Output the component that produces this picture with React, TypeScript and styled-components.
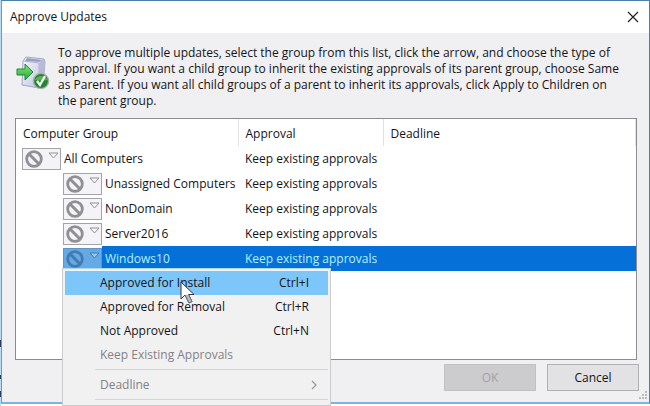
import React from "react";
import styled, { createGlobalStyle, css } from "styled-components";

const GlobalStyle = createGlobalStyle`
  *, *::before, *::after { box-sizing: border-box; }
  html, body { margin: 0; padding: 0; }
  body {
    overflow: hidden;
    color: #141416;
    font: 12px/16px "Open Sans", "Noto Sans", sans-serif;
  }
  button { font: inherit; color: inherit; }
`;

const Desktop = styled.div`
  display: flex;
  flex-direction: column;
  height: 100vh;
  padding: 0 0 2px 1px;
  background:
    linear-gradient(#2b3f66, #2b3f66) 0 340px / 1px 7px no-repeat,
    linear-gradient(#2b3f66, #2b3f66) 0 375px / 1px 4px no-repeat,
    linear-gradient(#2b3f66, #2b3f66) 0 391px / 1px 6px no-repeat,
    linear-gradient(#b9dcf0, #b9dcf0) 0 0 / 1px 100% no-repeat,
    #ffffff;
`;

const Dialog = styled.section`
  flex: 1;
  min-height: 0;
  display: flex;
  flex-direction: column;
  background: #f0eff1;
  border: 1px solid #4a7fae;
  border-left-color: #5d9fd0;
  border-bottom: 2px solid #7db5dd;
`;

const TitleBar = styled.header`
  display: flex;
  align-items: center;
  justify-content: space-between;
  height: 32px;
  padding: 0 8px;
  background: #ffffff;
`;

const Title = styled.h1`
  margin: 0;
  font-size: 12px;
  font-weight: 400;
`;

const CloseButton = styled.button`
  display: flex;
  padding: 2px;
  border: 0;
  background: none;
`;

const Intro = styled.div`
  display: flex;
  gap: 8px;
  padding: 12px 24px 9px 14px;

  svg { flex: none; margin-top: 11px; }
  p { margin: 0; }
`;

const ListBox = styled.div`
  flex: 1;
  min-height: 0;
  margin: 0 12px 0 13px;
  background: #ffffff;
  border: 1px solid #8c8c90;
`;

const GroupTable = styled.table`
  width: 100%;
  table-layout: fixed;
  border-collapse: collapse;
`;

const HeadCell = styled.th<{ $width?: number }>`
  height: 27px;
  width: ${(p) => (p.$width ? `${p.$width}px` : "auto")};
  padding: 3px 7px 0;
  border-right: 1px solid #e2e2e5;
  font-weight: 400;
  text-align: left;
`;

const Row = styled.tr<{ $selected?: boolean }>`
  height: 25px;
  ${(p) => p.$selected && css`color: #b4f1ff;`}
`;

const Cell = styled.td<{ $selected?: boolean }>`
  padding: 0 7px;
  white-space: nowrap;
  background: ${(p) => (p.$selected ? "#0470d8" : "transparent")};
`;

const GroupCell = styled.td`
  position: relative;
  padding: 0;
`;

const GroupLine = styled.div<{ $child?: boolean }>`
  display: flex;
  align-items: center;
  height: 25px;
  padding-left: ${(p) => (p.$child ? 47 : 6)}px;
`;

const GroupName = styled.span<{ $selected?: boolean }>`
  flex: 1;
  padding-left: 3px;
  line-height: 25px;
  white-space: nowrap;
  background: ${(p) => (p.$selected ? "#0470d8" : "transparent")};
`;

const StateButton = styled.button<{ $selected?: boolean }>`
  display: flex;
  flex: none;
  width: 39px;
  height: 22px;
  padding: 0;
  border: 1px solid ${(p) => (p.$selected ? "#6295c3" : "#a3a3a8")};
  background: ${(p) => (p.$selected ? "#63aae6" : "#f4f4f8")};
  color: ${(p) => (p.$selected ? "#427cae" : "#909094")};
`;

const Menu = styled.div`
  position: absolute;
  z-index: 2;
  top: 22px;
  left: 46px;
  width: 269px;
  padding: 2px;
  color: #141416;
  background: #f2f1f2;
  border: 1px solid #cccccc;
  border-top-color: #a9d9f5;
`;

const MenuItem = styled.button<{ $active?: boolean }>`
  display: flex;
  align-items: center;
  justify-content: space-between;
  width: 100%;
  height: 24px;
  padding: 0 19px 0 35px;
  border: 0;
  background: ${(p) => (p.$active ? "#7cc6fa" : "transparent")};

  &:disabled { color: #828285; }
`;

const SubmenuItem = styled(MenuItem)`
  padding-right: 10px;
`;

const Separator = styled.hr`
  margin: 2px 0 3px 30px;
  border: 0;
  border-top: 1px solid #d6d6d8;
`;

const Pointer = styled.svg`
  position: absolute;
  z-index: 3;
  top: 12px;
  left: 117px;
`;

const Footer = styled.footer`
  display: flex;
  justify-content: flex-end;
  gap: 11px;
  padding: 4px 10px 11px;
`;

const PushButton = styled.button`
  width: 92px;
  height: 27px;
  padding: 0;
  border: 1px solid #b1b1b5;
  background: #e2e1e4;

  &:disabled {
    color: #a2a2a7;
    border-color: #c1c0c4;
    background: #cccbce;
  }
`;

const Grip = styled.svg`
  position: absolute;
  right: 2px;
  bottom: 5px;
`;

function PackageIcon() {
  return (
    <svg width="34" height="34" viewBox="0 0 34 34" aria-hidden="true">
      <defs>
        <linearGradient id="box" x1="0" y1="0" x2="1" y2="1">
          <stop offset="0" stopColor="#f8f8ff" />
          <stop offset="1" stopColor="#b9bfdc" />
        </linearGradient>
        <linearGradient id="arrow" x1="0" y1="0" x2="0" y2="1">
          <stop offset="0" stopColor="#82e67e" />
          <stop offset="1" stopColor="#28aa2e" />
        </linearGradient>
      </defs>
      <path d="M7 5 10 1l18 2 1 3-2 22-4 4-17-3z" fill="url(#box)" stroke="#a3a6c6" />
      <path d="m7 5 16 2v24" fill="none" stroke="#b4b8d6" />
      <path d="m23 7 4-4 2 3-2 22-4 3z" fill="#b6bad8" />
      <path d="m9 5 2-3 15 2-3 2z" fill="#9a9fc2" />
      <path d="M1 13h8V8l8 8-8 8v-5H1z" fill="url(#arrow)" stroke="#258638" />
      <circle cx="25" cy="25" r="7.6" fill="#248532" stroke="#a9b3ae" strokeWidth="1.4" />
      <path d="M19 24a6.5 6.5 0 0 1 12 0q-6 1-12 0z" fill="#5caf57" />
      <path d="m21 25 3 4 5-9" fill="none" stroke="#fff" strokeWidth="2.2" />
    </svg>
  );
}

function StateIcon() {
  return (
    <svg width="37" height="20" viewBox="0 0 37 20" aria-hidden="true" fill="none" stroke="currentColor">
      <circle cx="11" cy="10" r="7.3" strokeWidth="2.8" />
      <path d="m6 5 10 10" strokeWidth="3" />
      <path d="M26 4h9l-4.500 5z" fill="#ffffff" fillOpacity=".35" />
    </svg>
  );
}

function Mark({ selected }: { selected?: boolean }) {
  return (
    <StateButton type="button" $selected={selected} aria-label="Change approval" aria-haspopup="menu">
      <StateIcon />
    </StateButton>
  );
}

function ApprovalMenu() {
  return (
    <Menu role="menu">
      <MenuItem role="menuitem" $active><span>Approved for Install</span><span>Ctrl+I</span></MenuItem>
      <MenuItem role="menuitem"><span>Approved for Removal</span><span>Ctrl+R</span></MenuItem>
      <MenuItem role="menuitem"><span>Not Approved</span><span>Ctrl+N</span></MenuItem>
      <MenuItem role="menuitem" disabled>Keep Existing Approvals</MenuItem>
      <Separator />
      <SubmenuItem role="menuitem" disabled>
        <span>Deadline</span>
        <svg width="7" height="10" viewBox="0 0 7 10" fill="none" stroke="#9b9b9e" strokeWidth="1.3" aria-hidden="true">
          <path d="m1 1 4 4-4 4" />
        </svg>
      </SubmenuItem>
      <Separator />
      <Pointer width="16" height="24" viewBox="0 0 16 24" aria-hidden="true">
        <path d="M1 1v17l4-4 4 8 3-1.500-3.500-7H14z" fill="#fff" stroke="#34343c" />
        <path d="m5 14 4 8 3-1.500-3.500-7" fill="#b9bac0" stroke="#707078" />
      </Pointer>
    </Menu>
  );
}

const groups = [
  { name: "All Computers", child: false, selected: false },
  { name: "Unassigned Computers", child: true, selected: false },
  { name: "NonDomain", child: true, selected: false },
  { name: "Server2016", child: true, selected: false },
  { name: "Windows10", child: true, selected: true },
];

export default function App() {
  return (
    <>
      <GlobalStyle />
      <Desktop>
        <Dialog role="dialog" aria-labelledby="dialog-title">
          <TitleBar>
            <Title id="dialog-title">Approve Updates</Title>
            <CloseButton type="button" aria-label="Close">
              <svg width="12" height="12" viewBox="0 0 12 12" stroke="#222" strokeWidth="1.2" aria-hidden="true">
                <path d="m1 1 10 10M11 1 1 11" />
              </svg>
            </CloseButton>
          </TitleBar>
          <Intro>
            <PackageIcon />
            <p>
              To approve multiple updates, select the group from this list, click the arrow, and choose the type of
              approval. If you want a child group to inherit the existing approvals of its parent group, choose Same
              as Parent. If you want all child groups of a parent to inherit its approvals, click Apply to Children on
              the parent group.
            </p>
          </Intro>
          <ListBox>
            <GroupTable>
              <thead>
                <tr>
                  <HeadCell $width={222}>Computer Group</HeadCell>
                  <HeadCell $width={145}>Approval</HeadCell>
                  <HeadCell>Deadline</HeadCell>
                </tr>
              </thead>
              <tbody>
                {groups.map((g) => (
                  <Row key={g.name} $selected={g.selected}>
                    <GroupCell>
                      <GroupLine $child={g.child}>
                        <Mark selected={g.selected} />
                        <GroupName $selected={g.selected}>{g.name}</GroupName>
                      </GroupLine>
                      {g.selected && <ApprovalMenu />}
                    </GroupCell>
                    <Cell $selected={g.selected}>Keep existing approvals</Cell>
                    <Cell $selected={g.selected} />
                  </Row>
                ))}
              </tbody>
            </GroupTable>
          </ListBox>
          <Footer>
            <PushButton type="button" disabled>OK</PushButton>
            <PushButton type="button">Cancel</PushButton>
          </Footer>
          <Grip width="10" height="10" viewBox="0 0 10 10" fill="#bcbcc0" aria-hidden="true">
            <path d="M7 0h2v2H7zM7 3h2v2H7zM7 6h2v2H7zM4 3h2v2H4zM4 6h2v2H4zM1 6h2v2H1z" />
          </Grip>
        </Dialog>
      </Desktop>
    </>
  );
}
